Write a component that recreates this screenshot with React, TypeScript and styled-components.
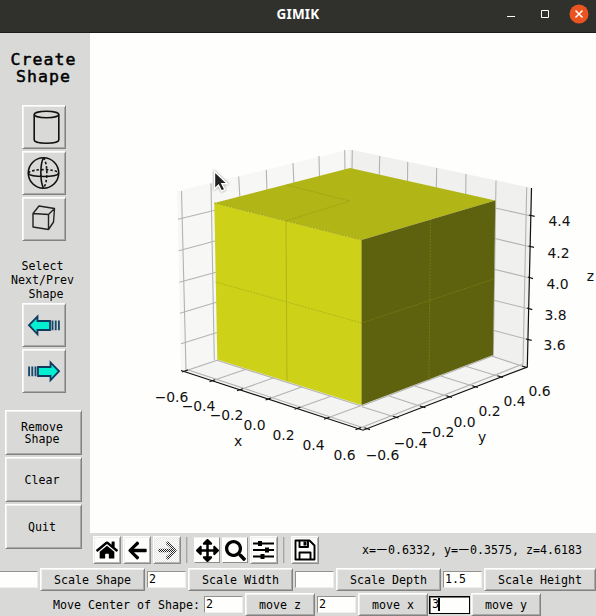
import React from 'react';
import styled, { createGlobalStyle, css } from 'styled-components';
import { FaHome, FaArrowLeft, FaArrowRight, FaArrowsAlt, FaSearch } from 'react-icons/fa';

const GlobalStyle = createGlobalStyle`
  * { box-sizing: border-box; }
  body { margin: 0; overflow: hidden; background: #d9dad7; }
`;

const Window = styled.div`
  width: 596px;
  height: 616px;
  overflow: hidden;
  display: flex;
  flex-direction: column;
  background: #d9dad7;
  color: #000;
  font: 11.63px/14px 'DejaVu Sans Mono', monospace;
`;

const TitleBar = styled.header`
  flex: none;
  height: 33px;
  display: grid;
  grid-template-columns: 1fr auto 1fr;
  align-items: center;
  padding-bottom: 4px;
  background: #30302d;
  border-bottom: 1px solid #1c1c1a;
`;

const WindowTitle = styled.h1`
  grid-column: 2;
  margin: 0;
  color: #fff;
  font: bold 13.5px/18px 'Noto Sans', sans-serif;
  letter-spacing: 0.2px;
`;

const WindowControls = styled.div`
  display: flex;
  justify-content: flex-end;
  padding-right: 7px;
`;

const Main = styled.div`
  flex: none;
  height: 534px;
  display: flex;
`;

const Sidebar = styled.aside`
  width: 90px;
  flex: none;
  display: flex;
  flex-direction: column;
  align-items: flex-start;
`;

const Heading = styled.h2`
  margin: 18px 0 20px;
  width: 87px;
  font: normal 16.5px/17px 'DejaVu Sans Mono', monospace;
  letter-spacing: 1.1px;
  -webkit-text-stroke: 0.5px #000;
  text-align: center;
  white-space: pre;
`;

const Caption = styled.p`
  margin: 18px 0 2px;
  width: 85px;
  text-align: center;
  white-space: pre;
`;

const raised = css`
  border: 1px solid;
  border-color: #fff #828282 #828282 #fff;
  box-shadow: inset 1px 1px #f1f1ef, inset -1px -1px #a9a9a6;
`;

const ButtonStack = styled.div<{ $gap: number; $left: number }>`
  display: flex;
  flex-direction: column;
  gap: ${(p) => p.$gap}px;
  margin-left: ${(p) => p.$left}px;
`;

const IconButton = styled.button`
  ${raised}
  width: 44px;
  height: 44px;
  padding: 0;
  background: #d9dad7;
  display: grid;
  place-items: center;
`;

const SideButton = styled.button`
  ${raised}
  width: 77px;
  height: 45px;
  padding: 2px 3px 0 0;
  color: inherit;
  background: #d9dad7;
  font: inherit;
  line-height: 11.5px;
  white-space: pre;
`;

const SideActions = styled(ButtonStack)`
  margin-top: 17px;
`;

const Figure = styled.section`
  width: 506px;
  display: flex;
  flex-direction: column;
`;

const Plot = styled.svg`
  display: block;
  flex: none;
  background: #fefefd;
`;

const TickText = styled.text`
  font: 13.9px 'DejaVu Sans', sans-serif;
  text-anchor: middle;
  fill: #111;
`;

const Toolbar = styled.div`
  display: flex;
  align-items: center;
  height: 34px;
  padding-left: 3px;
`;

const Tool = styled.button<{ $flat?: boolean; $gap?: number }>`
  width: ${(p) => (p.$flat ? 26 : 28)}px;
  height: ${(p) => (p.$flat ? 26 : 28)}px;
  margin-right: ${(p) => p.$gap ?? 2}px;
  padding: 0;
  display: grid;
  place-items: center;
  color: #000;
  background: #fefefd;
  border: 1px solid;
  border-color: ${(p) => (p.$flat ? '#eeeeec' : '#fff')} #8c8c8a #8c8c8a #fff;
  box-shadow: ${(p) => (p.$flat ? 'none' : 'inset 1px 1px #eeeeec, inset -1px -1px #b5b5b2')};
`;

const DisabledTool = styled(Tool)`
  color: #222;
  background: #e6e6e4;
`;

const Divider = styled.i`
  width: 2px;
  height: 26px;
  border-left: 1px solid #a5a5a2;
  border-right: 1px solid #c6c6c3;
  margin-right: 6px;
`;

const Message = styled.output`
  margin-left: auto;
  padding: 0 14px 1px 0;
  white-space: pre;
`;

const Minus = styled.span`
  display: inline-block;
  width: 12px;
  text-align: center;
  transform: scaleX(1.6) translateY(-1px);
`;

const FieldRow = styled.div<{ $start?: number }>`
  flex: none;
  height: 25px;
  display: flex;
  align-items: center;
  padding-left: ${(p) => p.$start ?? 0}px;
`;

const Entry = styled.div<{ $width?: number; $focused?: boolean; $clipped?: boolean }>`
  flex: none;
  width: ${(p) => p.$width ?? 39}px;
  height: 17px;
  margin-right: 2px;
  padding-left: 1px;
  line-height: 15px;
  background: #fefefd;
  border: 1px solid;
  border-color: #929290 #eeeeec #eeeeec #929290;
  ${(p) => p.$clipped && 'border-left: 0;'}
  ${(p) =>
    p.$focused &&
    css`
      width: 41px;
      height: 18px;
      margin: 0 1px 0 -1px;
      padding-left: 2px;
      border-color: #000;
      box-shadow: inset 1px 1px #777;
    `}
`;

const Caret = styled.i`
  display: inline-block;
  width: 2px;
  height: 13px;
  margin-left: -1px;
  background: #000;
  vertical-align: -3px;
`;

const FieldButton = styled.button<{ $width: number }>`
  ${raised}
  flex: none;
  width: ${(p) => p.$width}px;
  height: 23px;
  margin-right: 2px;
  padding: 0;
  color: inherit;
  background: #d9dad7;
  font: inherit;
`;

const FieldLabel = styled.span`
  width: 151px;
  white-space: nowrap;
`;

type Segment = [number, number, number, number];
type Label = [string, number, number];

const grid: Segment[] = [
  [181.5, 191, 186, 370], [211, 183.5, 214.3, 360], [238.7, 176.5, 240, 200],
  [266.3, 170, 267, 192], [293, 163, 294, 185], [319, 156, 319.5, 178], [344.7, 150, 345, 171],
  [352.3, 150, 352, 170], [379.7, 156, 379.3, 176], [407.7, 162, 407.5, 182],
  [436.7, 168, 436.3, 189], [466, 174, 465.7, 195], [496, 180.5, 493.3, 356], [526.7, 187.3, 523, 364.5],
  [178, 219.3, 216, 210], [178.7, 250.7, 216, 240.8], [179.3, 282.3, 217, 272], [180, 313.3, 218, 301.7], [181, 343.7, 218, 332.3],
  [494, 207.7, 531, 216], [494, 238.3, 531, 247], [494, 269.3, 530, 278], [493, 300, 529.5, 309], [493, 330.3, 529, 339.7],
  [185, 371, 218, 360], [212.3, 380.7, 246.7, 369], [240, 389.7, 274, 377.7], [268.3, 399, 301.7, 387],
  [297.3, 408.3, 331, 396.3], [326.7, 418.3, 360.7, 405.7], [358.3, 428.7, 523, 364],
  [367, 429, 186, 369.3], [395.7, 417.3, 362, 406.7], [422.7, 407, 389.3, 396], [449, 396.7, 415, 386],
  [475, 386.7, 440.7, 376], [500, 376.7, 465.7, 366.3], [524.7, 367, 491.7, 356],
  [217, 360.2, 361.5, 406], [361.5, 406, 493, 355.8],
];

const ticks: Segment[] = [
  [182, 372, 188, 370], [209.5, 381.7, 215, 379.7], [237, 390.7, 243, 388.7], [265.5, 400, 271, 398],
  [294.5, 409.3, 300.5, 407.3], [324, 419.3, 329.5, 417.3], [355.5, 429.6, 361, 427.6],
  [364.5, 427.7, 370, 429.6], [393, 416.3, 398.5, 418], [420, 406, 425.5, 407.8], [446.3, 395.7, 452, 397.5],
  [472.3, 385.7, 477.8, 387.5], [497.5, 375.7, 503, 377.5], [522, 366, 527, 367.6],
  [529, 215, 534.7, 216.4], [528.6, 246, 534, 247.4], [528, 277, 533, 278.6], [527, 308, 532.3, 309.6], [526, 339, 531.7, 340.4],
];

const labels: Label[] = [
  ['−0.6', 171.5, 402], ['−0.4', 198.5, 411], ['−0.2', 226.5, 420], ['0.0', 254.5, 430], ['0.2', 283.5, 440], ['0.4', 313.5, 450], ['0.6', 344.5, 460],
  ['−0.6', 382.5, 460], ['−0.4', 410.5, 448], ['−0.2', 437.5, 437], ['0.0', 464.5, 427], ['0.2', 489.5, 416], ['0.4', 514.5, 406], ['0.6', 539.5, 396],
  ['4.4', 559.5, 226], ['4.2', 558.5, 258], ['4.0', 557.5, 289], ['3.8', 555.5, 320], ['3.6', 554.5, 350],
  ['x', 238, 446], ['y', 482, 442], ['z', 590.5, 281],
];

const Lines = ({ items }: { items: Segment[] }) => (
  <>
    {items.map(([x1, y1, x2, y2], i) => (
      <line key={i} x1={x1} y1={y1} x2={x2} y2={y2} />
    ))}
  </>
);

const CubePlot = () => (
  <Plot width="506" height="500" viewBox="90 33 506 500">
    <path d="M177 191 350 149.5 350 315 181 370.5Z" fill="#f7f7f6" />
    <path d="M350 149.5 532 188 527.5 367 350 315Z" fill="#f0f0ef" />
    <path d="M181 370.5 350 315 527.5 367 363 430Z" fill="#f4f4f3" />
    <g stroke="#b3b3b2" strokeWidth="1.1"><Lines items={grid} /></g>
    <g stroke="#111" strokeWidth="1.2">
      <path d="M181 370.5 363 430.2 527.3 367 531.5 188" fill="none" />
      <Lines items={ticks} />
    </g>
    <path d="M214.3 203 350 168 495.3 200.5 361.5 240Z" fill="#b2b516" />
    <path d="M214.3 203 361.5 240V405L217.3 359.5Z" fill="#cdd218" />
    <path d="M361.5 240 495.3 200.5 493 355 361.5 405Z" fill="#5e620e" />
    <g fill="none" strokeWidth="0.8">
      <path d="M287 185 350 201M286 221 350 201M214.3 203 361.5 240" stroke="#999d14" strokeDasharray="2 1" />
      <path d="M286 221 287 381" stroke="#a9ad16" />
      <path d="M215.5 282 361.5 323" stroke="#aaad16" strokeDasharray="2 1" />
      <path d="M361.5 323 494 279M430.5 220 429 380" stroke="#7a7e14" strokeDasharray="2 1" />
    </g>
    {labels.map(([text, x, y], i) => (
      <TickText key={i} x={x} y={y}>{text}</TickText>
    ))}
    <path
      d="M214.5 171.5V189l4-3.8 3 6 3.4-1.7-3-5.7h5.5Z"
      fill="#222"
      stroke="#fff"
      strokeWidth="1.4"
      filter="drop-shadow(0 0 1px #888)"
    />
  </Plot>
);

const Cylinder = () => (
  <svg width="40" height="40" fill="none" stroke="#111" strokeWidth="1.6">
    <ellipse cx="22.5" cy="7.5" rx="12.3" ry="3.2" />
    <path d="M10.2 7.5V33c0 4.3 24.6 4.3 24.6 0V7.5" />
  </svg>
);

const Sphere = () => (
  <svg width="40" height="40" fill="none" stroke="#111" strokeWidth="1.6">
    <circle cx="19.5" cy="20" r="15.2" />
    <path d="M4.3 20.5c3 4 27.4 4 30.4 0M19.5 4.8c-3.5 6-3.5 24 0 30.4" />
    <path d="M4.3 20c3-4.5 27.4-4.5 30.4 0M19.5 4.8c4.5 6 4.5 24 0 30.4" strokeDasharray="2.5 2" />
  </svg>
);

const Cube = () => (
  <svg width="40" height="40" fill="none" stroke="#222" strokeWidth="1.4" strokeLinejoin="round">
    <path d="M9 14.5 24.5 15.5V30.5L9 28ZM9 14.5 15 7 30.5 9.5 24.5 15.5M30.5 9.5 29.5 23 24.5 30.5" />
  </svg>
);

const CyanArrow = ({ forward }: { forward?: boolean }) => (
  <svg width="40" height="40">
    <g transform={forward ? 'matrix(-1 0 0 1 40 0)' : undefined}>
      <path d="M5 20.2 13.5 11.5V16H26V25H13.5V29.3Z" fill="#04eed0" stroke="#123a60" strokeWidth="1.8" />
      <path d="M28.5 15.5v9.8M31.7 15.5v9.8M34.9 15.5v9.8" stroke="#174a6c" strokeWidth="1.9" />
    </g>
  </svg>
);

const Sliders = () => (
  <svg width="22" height="22" stroke="#000" strokeWidth="2">
    <path d="M0 4.5h21M0 11h21M0 17.5h21" />
    <path d="M7 2v5M14 8.5v5M9.5 15v5" strokeWidth="4" />
  </svg>
);

const Floppy = () => (
  <svg width="22" height="22" fill="none" stroke="#000" strokeWidth="1.9" strokeLinejoin="round">
    <path d="M1.5 1.5H15.5L20.5 6.5V20.5H1.5Z" />
    <path d="M5.5 1.5V8H14V1.5M5.5 20.5V13.5H16.5V20.5" />
    <path d="M11 2.5V6.5" strokeWidth="3" />
  </svg>
);

const DitheredArrow = () => (
  <svg width="24" height="24" viewBox="0 0 24 24">
    <defs>
      <pattern id="stipple" width="2" height="2" patternUnits="userSpaceOnUse">
        <path d="M0 0h1v1H0zM1 1h1v1H1z" fill="#fff" />
      </pattern>
    </defs>
    <FaArrowRight x="2" y="2" size={21} />
    <path d="M0 0h24v24H0z" fill="url(#stipple)" />
  </svg>
);

export default function App() {
  return (
    <Window>
      <GlobalStyle />
      <TitleBar>
        <span />
        <WindowTitle>GIMIK</WindowTitle>
        <WindowControls>
          <svg width="84" height="22" fill="none" stroke="#fff">
            <path d="M2 13.5h8" />
            <path d="M36.5 7.5h7v7h-7z" />
            <circle cx="74" cy="11" r="9.5" fill="#e95420" stroke="none" />
            <path d="m70.5 7.5 7 7m0-7-7 7" strokeWidth="1.5" />
          </svg>
        </WindowControls>
      </TitleBar>
      <Main>
        <Sidebar>
          <Heading>{'Create\nShape'}</Heading>
          <ButtonStack $gap={2} $left={22}>
            <IconButton><Cylinder /></IconButton>
            <IconButton><Sphere /></IconButton>
            <IconButton><Cube /></IconButton>
          </ButtonStack>
          <Caption>{'Select\nNext/Prev\n Shape'}</Caption>
          <ButtonStack $gap={2} $left={22}>
            <IconButton><CyanArrow /></IconButton>
            <IconButton><CyanArrow forward /></IconButton>
          </ButtonStack>
          <SideActions $gap={2} $left={5}>
            <SideButton>{'Remove\nShape'}</SideButton>
            <SideButton>Clear</SideButton>
            <SideButton>Quit</SideButton>
          </SideActions>
        </Sidebar>
        <Figure>
          <CubePlot />
          <Toolbar>
            <Tool><FaHome size={22} /></Tool>
            <Tool><FaArrowLeft size={21} /></Tool>
            <DisabledTool $gap={5}><DitheredArrow /></DisabledTool>
            <Divider />
            <Tool $flat><FaArrowsAlt size={23} /></Tool>
            <Tool $flat><FaSearch size={21} /></Tool>
            <Tool $gap={5}><Sliders /></Tool>
            <Divider />
            <Tool><Floppy /></Tool>
            <Message>x=<Minus>−</Minus>0.6332, y=<Minus>−</Minus>0.3575, z=4.6183</Message>
          </Toolbar>
        </Figure>
      </Main>
      <FieldRow>
        <Entry $width={38} $clipped />
        <FieldButton $width={105}>Scale Shape</FieldButton>
        <Entry>2</Entry>
        <FieldButton $width={105}>Scale Width</FieldButton>
        <Entry />
        <FieldButton $width={105}>Scale Depth</FieldButton>
        <Entry>1.5</Entry>
        <FieldButton $width={112}>Scale Height</FieldButton>
      </FieldRow>
      <FieldRow $start={53}>
        <FieldLabel>Move Center of Shape:</FieldLabel>
        <Entry>2</Entry>
        <FieldButton $width={70}>move z</FieldButton>
        <Entry>2</Entry>
        <FieldButton $width={70}>move x</FieldButton>
        <Entry $focused>3<Caret /></Entry>
        <FieldButton $width={70}>move y</FieldButton>
      </FieldRow>
    </Window>
  );
}
